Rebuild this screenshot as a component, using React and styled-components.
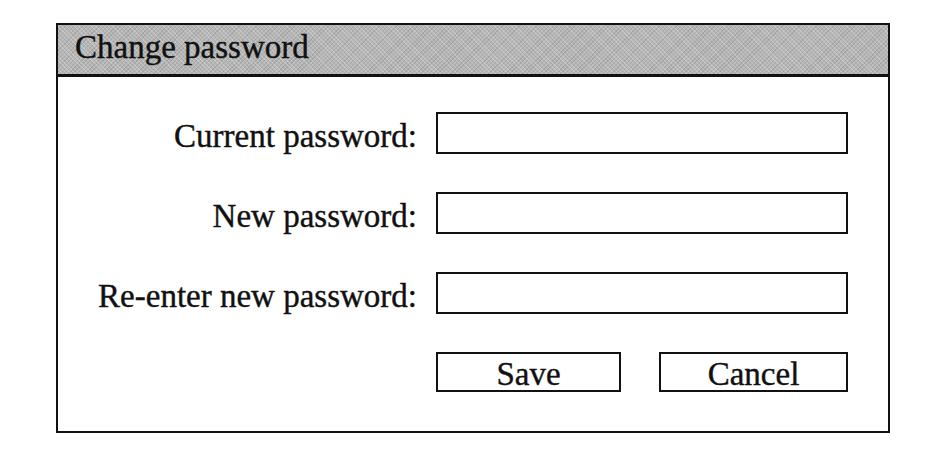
import React from "react";
import styled, { createGlobalStyle } from "styled-components";

const Global = createGlobalStyle`
  html, body { margin: 0; padding: 0; background: #ffffff; }
  body { font-family: "Liberation Serif", "Times New Roman", serif; color: #111; }
`;

const Page = styled.div`
  width: 951px;
  height: 457px;
  padding: 23px 0 0 56px;
  box-sizing: border-box;
`;

const Dialog = styled.div`
  width: 834px;
  height: 410px;
  box-sizing: border-box;
  border: 2px solid #111;
  display: flex;
  flex-direction: column;
  background: #fff;
`;

const TitleBar = styled.div`
  height: 52px;
  box-sizing: border-box;
  background-color: #b6b6b6;
  background-image: repeating-linear-gradient(45deg, rgba(255,255,255,0.22) 0 1px, transparent 1px 3px),
    repeating-linear-gradient(-45deg, rgba(0,0,0,0.1) 0 1px, transparent 1px 3px);
  border-bottom: 3px solid #111;
  display: flex;
  align-items: center;
  padding-left: 17px;
  font-size: 33px;
  line-height: 1;
  padding-bottom: 4px;
  -webkit-text-stroke: 0.4px #111;
`;

const Body = styled.div`
  flex: 1;
  display: grid;
  grid-template-columns: 1fr 412px;
  grid-auto-rows: 42px;
  column-gap: 19px;
  row-gap: 38px;
  padding: 35px 40px 0 0;
  align-items: center;
`;

const Label = styled.label`
  justify-self: end;
  font-size: 33px;
  line-height: 1;
  padding-top: 6px;
  white-space: nowrap;
  -webkit-text-stroke: 0.4px #111;
`;

const Field = styled.div`
  height: 42px;
  box-sizing: border-box;
  border: 2px solid #111;
  background: #fff;
`;

const Actions = styled.div`
  grid-column: 2;
  display: flex;
  justify-content: space-between;
  align-self: start;
`;

const Button = styled.div`
  width: ${(p) => p.$w}px;
  height: 40px;
  box-sizing: border-box;
  border: 2px solid #111;
  display: flex;
  align-items: center;
  justify-content: center;
  font-size: 33px;
  line-height: 1;
  padding-top: 4px;
  -webkit-text-stroke: 0.4px #111;
`;

const rows = ["Current password:", "New password:", "Re-enter new password:"];

export default function App() {
  return (
    <>
      <Global />
      <Page>
        <Dialog>
          <TitleBar>Change password</TitleBar>
          <Body>
            {rows.map((r) => (
              <React.Fragment key={r}>
                <Label>{r}</Label>
                <Field />
              </React.Fragment>
            ))}
            <Actions>
              <Button $w={185}>Save</Button>
              <Button $w={189}>Cancel</Button>
            </Actions>
          </Body>
        </Dialog>
      </Page>
    </>
  );
}
